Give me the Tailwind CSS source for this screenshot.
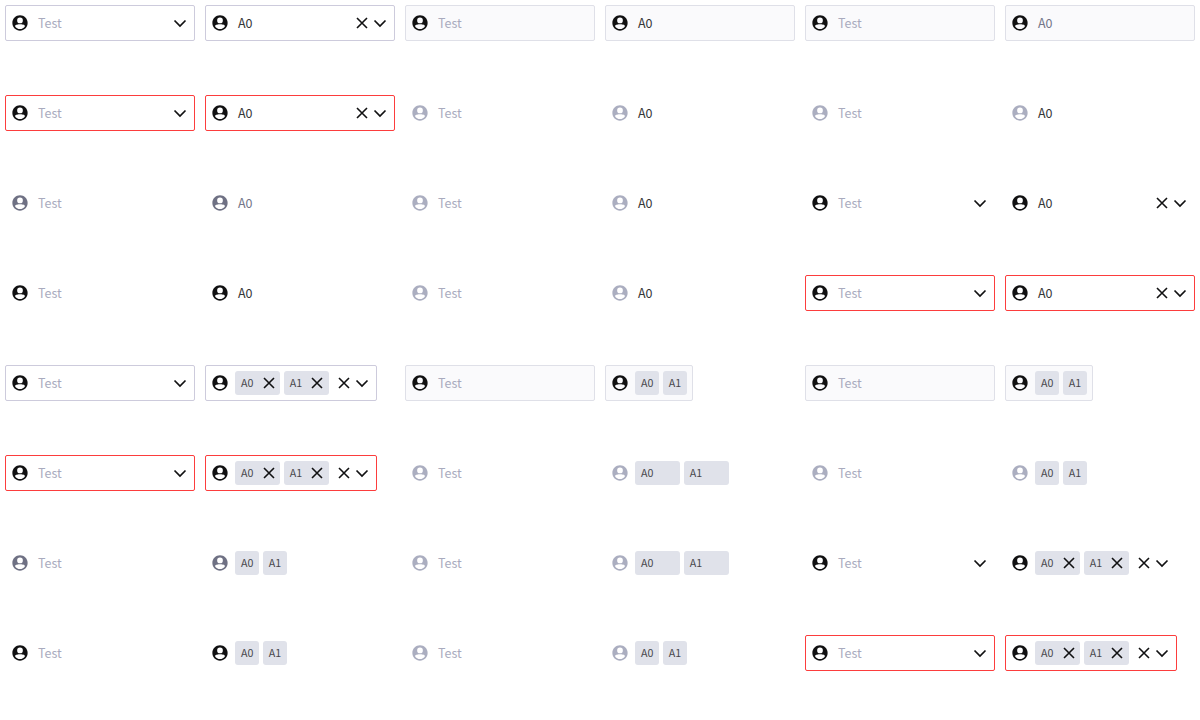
<!DOCTYPE html>
<html lang="en">
<head>
<meta charset="utf-8">
<title>Select states</title>
<script src="https://cdn.jsdelivr.net/npm/@tailwindcss/browser@4"></script>
</head>
<body class="bg-white text-[#111112] antialiased">
<svg class="hidden">
  <symbol id="user" viewBox="0 0 24 24"><path fill="currentColor" d="M12 1.800C6.360 1.800 1.800 6.360 1.800 12s4.560 10.200 10.200 10.200 10.200-4.560 10.200-10.200S17.640 1.800 12 1.800zm0 3a3.800 3.800 0 1 1 0 7.600 3.800 3.800 0 0 1 0-7.600zm0 15.200c-2.800 0-5.200-1.400-6.600-3.800.1-2 4.400-2.500 6.600-2.500s6.500.5 6.600 2.500c-1.400 2.400-3.800 3.800-6.600 3.800z"/></symbol>
  <symbol id="cross" viewBox="0 0 18 18"><path fill="none" stroke="currentColor" stroke-width="1.600" d="M4 4l10 10M14 4L4 14"/></symbol>
  <symbol id="chevron" viewBox="0 0 18 18"><path fill="none" stroke="currentColor" stroke-width="1.700" d="M3.500 6.500L9 12l5.500-5.500"/></symbol>
</svg>
<main id="grid" class="grid w-[1200px] grid-cols-6 auto-rows-[90px] overflow-hidden font-['Noto_Sans_CJK_SC','Noto_Sans',sans-serif] text-[12.500px] leading-[18px]"></main>
<script>
const frames = {
  normal: 'border-[#cdcbdc]',
  error: 'border-[#fc3d3d]',
  muted: 'border-[#dfe0e8] bg-[#fafafc]',
  none: 'border-transparent'
};
const colors = { black: 'text-[#111112]', dark: 'text-[#6f7184]', light: 'text-[#abaec0]' };
const textColors = { black: 'text-[#363638]', dark: 'text-[#747689]' };
const icon = (id, cls = '') => `<svg class="size-[18px] shrink-0 ${cls}"><use href="#${id}"/></svg>`;

/* frame, icon colour, value colour, has controls */
const single = [
  ['normal','black','black',1], ['muted','black','black',0], ['muted','black','dark',0],
  ['error','black','black',1], ['none','light','black',0], ['none','light','black',0],
  ['none','dark','dark',0], ['none','light','black',0], ['none','black','black',1],
  ['none','black','black',0], ['none','light','black',0], ['error','black','black',1]
];
/* read-only rows whose tags keep the room of the remove button */
const keptSpace = [4, 7];

function field(s, body, clear, wide) {
  return `<div class="p-[5px]"><div class="flex h-9 items-center rounded-[2px] border px-[5px] ${wide ? 'w-full' : 'w-fit'} ${frames[s[0]]}">
    ${icon('user', colors[s[1]])}${body}
    ${s[3] ? `<div class="flex ${wide ? 'ml-auto' : 'ml-1.5'}">${clear ? icon('cross') : ''}${icon('chevron')}</div>` : ''}
  </div></div>`;
}
const text = (t, c) => `<span class="ml-[9px] ${c}">${t}</span>`;
const tag = (t, s, i) => `<span class="flex h-6 items-center rounded-[3px] bg-[#e0e2ea] pl-[6px] text-[10.700px] text-[#48484c] ${s[3] || keptSpace.includes(i) ? (t === 'A0' ? 'w-[45.400px]' : 'w-[44.900px]') : 'w-[24.300px]'}">${t}${s[3] ? icon('cross', 'ml-auto mr-[2.800px] text-[#111112]') : ''}</span>`;

let html = '';
for (const multi of [false, true]) single.forEach((s, i) => {
  html += field(s, text('Test', 'text-[#a9abbe]'), false, true);
  html += multi
    ? field(s, `<div class="ml-1.5 flex gap-[3.400px]">${tag('A0', s, i)}${tag('A1', s, i)}</div>`, true, false)
    : field(s, text('A0', textColors[s[2]]), true, true);
});
document.getElementById('grid').innerHTML = html;
</script>
</body>
</html>
